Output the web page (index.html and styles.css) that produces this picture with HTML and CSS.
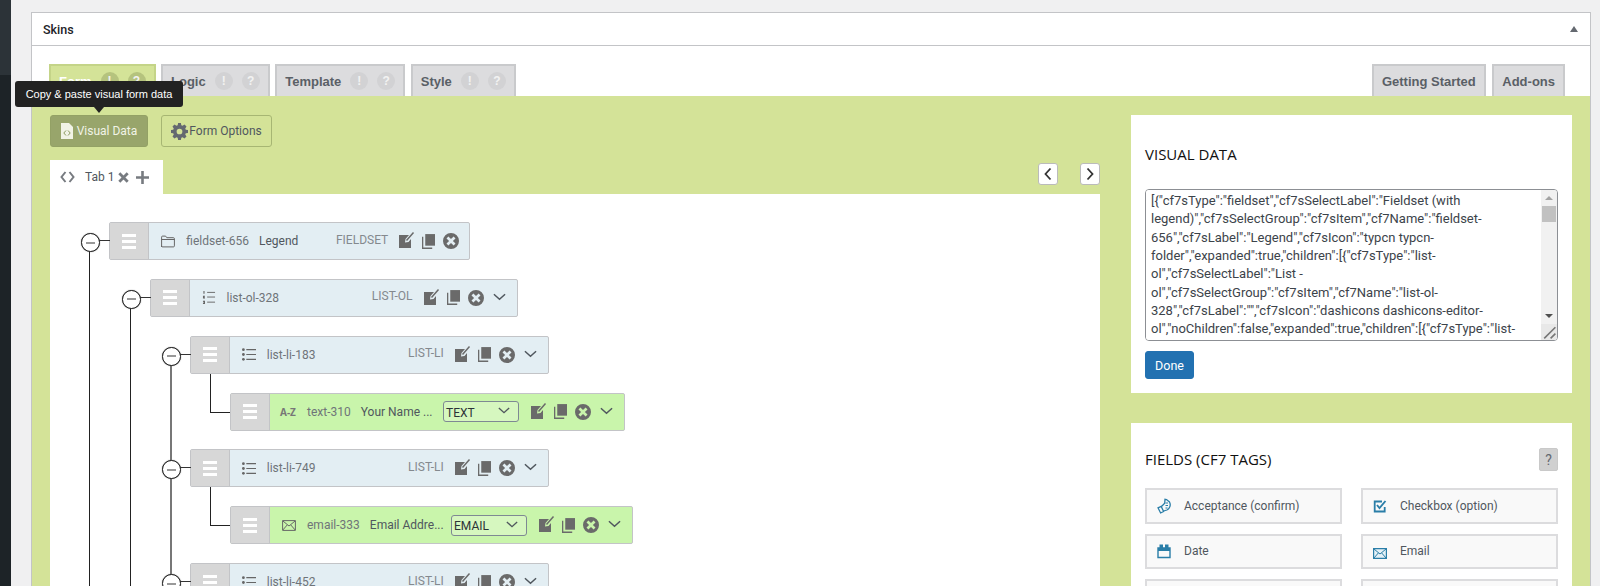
FILE: index.html
```html
<!DOCTYPE html>
<html lang="en">
<head>
    <meta charset="UTF-8">
    <title>Skins</title>
    <link rel="stylesheet" href="styles.css">
</head>
<body>
    <svg class="icon-defs" xmlns="http://www.w3.org/2000/svg">
        <symbol id="i-edit" viewBox="0 0 16 17">
            <path d="M0 4h10L6.500 8 6 11.500l3.500-.6L12 8v9H0z"/>
            <path d="M7.500 9.500 14.500 1.500" fill="none" stroke-width="1.500" stroke="currentColor"/>
        </symbol>
        <symbol id="i-copy" viewBox="0 0 14 16">
            <path d="M3.500 0H14v12.500H3.500z"/>
            <path d="M1.400 3v11.500H11v1.500H0V3z"/>
        </symbol>
        <symbol id="i-close" viewBox="0 0 16 16">
            <path fill-rule="evenodd" d="M8 0a8 8 0 1 1 0 16A8 8 0 0 1 8 0zM5.400 3.500 3.500 5.400 6.100 8l-2.600 2.600 1.900 1.900L8 9.900l2.600 2.600 1.900-1.900L9.900 8l2.600-2.600-1.900-1.900L8 6.100z"/>
        </symbol>
        <symbol id="i-chevron" viewBox="0 0 14 8">
            <path d="M1 1l6 5.500L13 1" fill="none" stroke="currentColor" stroke-width="1.600"/>
        </symbol>
        <symbol id="i-folder" viewBox="0 0 14 12">
            <path d="M.6 11.400V1.600q0-1 1-1h3l1.200 1.600h6.600q1 0 1 1v7.200q0 1-1 1H1.600q-1 0-1-1zM.6 4h12.800" fill="none" stroke="currentColor" stroke-width="1"/>
        </symbol>
        <symbol id="i-ol" viewBox="0 0 13 14">
            <path d="M4.500 1.500H13M4.500 6.500H13M4.500 12H13" fill="none" stroke="currentColor" stroke-width="1"/>
            <path d="M.5 0h1.200v3H.5zM0 5h2.200v1.200H1.200v.6H2.200V8H0zM0 10.500h2.200V14H0v-1h1.200v-.3H.4v-1h.8v-.2H0z"/>
        </symbol>
        <symbol id="i-ul" viewBox="0 0 13 12">
            <path d="M4 1.500h9M4 6h9M4 10.500h9" fill="none" stroke="currentColor" stroke-width="1"/>
            <circle cx="1.300" cy="1.500" r="1.300"/>
            <circle cx="1.300" cy="6" r="1.300"/>
            <circle cx="1.300" cy="10.500" r="1.300"/>
        </symbol>
        <symbol id="i-mail" viewBox="0 0 14 11">
            <path d="M.6.600h12.800v9.800H.6zM.8.900 7 6l6.200-5.100M.8 10l4.400-5M13.200 10 8.800 5" fill="none" stroke="currentColor" stroke-width="1"/>
        </symbol>
    </svg>

    <div class="admin-menu">
        <div class="admin-menu-item"></div>
    </div>

    <div class="wrap">
        <div class="postbox">
            <div class="postbox-header">
                <h2>Skins</h2>
                <span class="toggle-arrow"></span>
            </div>

            <div class="tabs">
                <div class="tab tab-active">Form <span class="badge">!</span><span class="badge">?</span></div>
                <div class="tab">Logic <span class="badge">!</span><span class="badge">?</span></div>
                <div class="tab">Template <span class="badge">!</span><span class="badge">?</span></div>
                <div class="tab">Style <span class="badge">!</span><span class="badge">?</span></div>
                <div class="tab tab-push">Getting Started</div>
                <div class="tab">Add-ons</div>
            </div>

            <div class="panel">
                <div class="panel-main">
                    <div class="toolbar">
                        <button class="tool-button tool-button-on">
                            <svg class="doc-icon" viewBox="0 0 12 16">
                                <path d="M0 0h8l4 4v12H0z" fill="#f1f3e6"/>
                                <path d="M5 7.500 2.800 10 5 12.500M7 7.500 9.200 10 7 12.500" fill="none" stroke="#8b9a5f" stroke-width="1"/>
                            </svg>
                            <span>Visual Data</span>
                            <span class="tooltip">Copy &amp; paste visual form data</span>
                        </button>
                        <button class="tool-button">
                            <svg class="gear-icon" viewBox="0 0 16 16">
                                <path fill-rule="evenodd" d="M6.700 0h2.600l.4 2.100 1.200.5L12.700 1.400l1.900 1.900-1.200 1.800.5 1.200 2.100.4v2.600l-2.100.4-.5 1.200 1.200 1.800-1.900 1.900-1.800-1.200-1.200.5-.4 2.100H6.700l-.4-2.100-1.200-.5-1.800 1.200-1.900-1.900 1.200-1.800-.5-1.200L0 9.300V6.700l2.100-.4.500-1.200-1.200-1.800 1.900-1.900 1.800 1.200 1.200-.5zM8 5.300a2.700 2.700 0 1 0 0 5.400 2.700 2.700 0 0 0 0-5.400z"/>
                            </svg>
                            <span>Form Options</span>
                        </button>
                    </div>

                    <div class="form-tabs">
                        <div class="form-tab">
                            <svg class="code-icon" viewBox="0 0 15 12">
                                <path d="M5.500 1 1.500 6l4 5M9.500 1l4 5-4 5" fill="none" stroke="currentColor" stroke-width="2"/>
                            </svg>
                            <span class="form-tab-name">Tab 1</span>
                            <svg class="tab-x" viewBox="0 0 11 11">
                                <path d="M1.300 1.300l8.400 8.400M9.700 1.300l-8.400 8.400" fill="none" stroke="currentColor" stroke-width="2.800"/>
                            </svg>
                            <svg class="tab-plus" viewBox="0 0 13 13">
                                <path d="M6.500 0v13M0 6.500h13" fill="none" stroke="currentColor" stroke-width="2.600"/>
                            </svg>
                        </div>
                        <div class="form-tab-nav">
                            <button class="nav-button"><svg viewBox="0 0 8 14"><path d="M6.500 1.500 1.500 7l5 5.500" fill="none" stroke="currentColor" stroke-width="1.800"/></svg></button>
                            <button class="nav-button"><svg viewBox="0 0 8 14"><path d="M1.500 1.500l5 5.500-5 5.500" fill="none" stroke="currentColor" stroke-width="1.800"/></svg></button>
                        </div>
                    </div>

                    <div class="form-area">
                        <ul class="tree">
                            <li class="has-children">
                                <div class="node w-fieldset">
                                    <span class="handle"><i></i><i></i><i></i></span>
                                    <svg class="node-icon"><use href="#i-folder"/></svg>
                                    <span class="node-name">fieldset-656</span>
                                    <span class="node-label">Legend</span>
                                    <span class="node-type">FIELDSET</span>
                                    <svg class="act act-edit"><use href="#i-edit"/></svg>
                                    <svg class="act act-copy"><use href="#i-copy"/></svg>
                                    <svg class="act act-close"><use href="#i-close"/></svg>
                                </div>
                                <ul>
                                    <li class="has-children">
                                        <div class="node w-ol">
                                            <span class="handle"><i></i><i></i><i></i></span>
                                            <svg class="node-icon"><use href="#i-ol"/></svg>
                                            <span class="node-name">list-ol-328</span>
                                            <span class="node-type">LIST-OL</span>
                                            <svg class="act act-edit"><use href="#i-edit"/></svg>
                                            <svg class="act act-copy"><use href="#i-copy"/></svg>
                                            <svg class="act act-close"><use href="#i-close"/></svg>
                                            <svg class="act-chevron"><use href="#i-chevron"/></svg>
                                        </div>
                                        <ul>
                                            <li class="has-children">
                                                <div class="node w-li">
                                                    <span class="handle"><i></i><i></i><i></i></span>
                                                    <svg class="node-icon"><use href="#i-ul"/></svg>
                                                    <span class="node-name">list-li-183</span>
                                                    <span class="node-type">LIST-LI</span>
                                                    <svg class="act act-edit"><use href="#i-edit"/></svg>
                                                    <svg class="act act-copy"><use href="#i-copy"/></svg>
                                                    <svg class="act act-close"><use href="#i-close"/></svg>
                                                    <svg class="act-chevron"><use href="#i-chevron"/></svg>
                                                </div>
                                                <ul>
                                                    <li class="leaf">
                                                        <div class="node node-field w-text">
                                                            <span class="handle"><i></i><i></i><i></i></span>
                                                            <span class="az-icon">A-Z</span>
                                                            <span class="node-name">text-310</span>
                                                            <span class="node-label">Your Name ...</span>
                                                            <span class="node-select">TEXT<svg><use href="#i-chevron"/></svg></span>
                                                            <svg class="act act-edit"><use href="#i-edit"/></svg>
                                                            <svg class="act act-copy"><use href="#i-copy"/></svg>
                                                            <svg class="act act-close"><use href="#i-close"/></svg>
                                                            <svg class="act-chevron"><use href="#i-chevron"/></svg>
                                                        </div>
                                                    </li>
                                                </ul>
                                            </li>
                                            <li class="has-children">
                                                <div class="node w-li">
                                                    <span class="handle"><i></i><i></i><i></i></span>
                                                    <svg class="node-icon"><use href="#i-ul"/></svg>
                                                    <span class="node-name">list-li-749</span>
                                                    <span class="node-type">LIST-LI</span>
                                                    <svg class="act act-edit"><use href="#i-edit"/></svg>
                                                    <svg class="act act-copy"><use href="#i-copy"/></svg>
                                                    <svg class="act act-close"><use href="#i-close"/></svg>
                                                    <svg class="act-chevron"><use href="#i-chevron"/></svg>
                                                </div>
                                                <ul>
                                                    <li class="leaf">
                                                        <div class="node node-field w-email">
                                                            <span class="handle"><i></i><i></i><i></i></span>
                                                            <svg class="node-icon"><use href="#i-mail"/></svg>
                                                            <span class="node-name">email-333</span>
                                                            <span class="node-label">Email Addre...</span>
                                                            <span class="node-select">EMAIL<svg><use href="#i-chevron"/></svg></span>
                                                            <svg class="act act-edit"><use href="#i-edit"/></svg>
                                                            <svg class="act act-copy"><use href="#i-copy"/></svg>
                                                            <svg class="act act-close"><use href="#i-close"/></svg>
                                                            <svg class="act-chevron"><use href="#i-chevron"/></svg>
                                                        </div>
                                                    </li>
                                                </ul>
                                            </li>
                                            <li class="has-children">
                                                <div class="node w-li">
                                                    <span class="handle"><i></i><i></i><i></i></span>
                                                    <svg class="node-icon"><use href="#i-ul"/></svg>
                                                    <span class="node-name">list-li-452</span>
                                                    <span class="node-type">LIST-LI</span>
                                                    <svg class="act act-edit"><use href="#i-edit"/></svg>
                                                    <svg class="act act-copy"><use href="#i-copy"/></svg>
                                                    <svg class="act act-close"><use href="#i-close"/></svg>
                                                    <svg class="act-chevron"><use href="#i-chevron"/></svg>
                                                </div>
                                            </li>
                                        </ul>
                                    </li>
                                </ul>
                            </li>
                        </ul>
                    </div>
                </div>

                <div class="panel-side">
                    <div class="card">
                        <h3 class="card-title card-title-data">VISUAL DATA</h3>
                        <div class="data-box">
                            <textarea class="data-text" wrap="off" readonly>[{"cf7sType":"fieldset","cf7sSelectLabel":"Fieldset (with
legend)","cf7sSelectGroup":"cf7sItem","cf7Name":"fieldset-
656","cf7sLabel":"Legend","cf7sIcon":"typcn typcn-
folder","expanded":true,"children":[{"cf7sType":"list-
ol","cf7sSelectLabel":"List -
ol","cf7sSelectGroup":"cf7sItem","cf7Name":"list-ol-
328","cf7sLabel":"","cf7sIcon":"dashicons dashicons-editor-
ol","noChildren":false,"expanded":true,"children":[{"cf7sType":"list-</textarea>
                            <div class="scrollbar">
                                <span class="scroll-up"></span>
                                <span class="scroll-thumb"></span>
                                <span class="scroll-down"></span>
                                <span class="scroll-grip">
                                    <svg viewBox="0 0 10 10"><path d="M9 2 2 9M9 6 6 9" fill="none" stroke="#777" stroke-width="1"/></svg>
                                </span>
                            </div>
                        </div>
                        <button class="done-button">Done</button>
                    </div>

                    <div class="card card-fields">
                        <div class="card-head">
                            <h3 class="card-title">FIELDS (CF7 TAGS)</h3>
                            <span class="help-button">?</span>
                        </div>
                        <div class="field-grid">
                            <div class="field-item">
                                <svg class="field-icon" viewBox="0 0 14 16">
                                    <path d="M1 9.800 3.600 15l3-1.500L4.200 8.400zM4.500 8.500l3.200-3.200.3-4 1.500.3 3 2.400q1.200 2.200.4 4.600t-3 3.400l-3.300 1" fill="none" stroke="currentColor" stroke-width="1.300"/>
                                    <path d="M8.500 5h2.500M8.500 7.500h2.500M8.500 10h2" fill="none" stroke="currentColor" stroke-width="1"/>
                                </svg>
                                Acceptance (confirm)
                            </div>
                            <div class="field-item">
                                <svg class="field-icon" viewBox="0 0 14 16">
                                    <path d="M9 3.500H1.700v10h10V9" fill="none" stroke="currentColor" stroke-width="1.800"/>
                                    <path d="M4 7l2.500 3L12.500 3" fill="none" stroke="currentColor" stroke-width="1.900"/>
                                </svg>
                                Checkbox (option)
                            </div>
                            <div class="field-item">
                                <svg class="field-icon" viewBox="0 0 14 16">
                                    <path d="M1 5h12v9.500H1z" fill="none" stroke="currentColor" stroke-width="1.400"/>
                                    <path d="M1 5h12v3H1zM2.500 1.500h3.500V5H2.500zM8 1.500h3.500V5H8z"/>
                                </svg>
                                Date
                            </div>
                            <div class="field-item">
                                <svg class="field-icon field-icon-mail" viewBox="0 0 14 11">
                                    <path d="M.6.600h12.800v9.800H.6z" fill="#e4f1f7" stroke="currentColor" stroke-width="1.200"/>
                                    <path d="M1 1l6 5 6-5M1 10l4.300-5M13 10 8.700 5" fill="none" stroke="currentColor" stroke-width="1"/>
                                </svg>
                                Email
                            </div>
                            <div class="field-item"></div>
                            <div class="field-item"></div>
                        </div>
                    </div>
                </div>
            </div>
        </div>
    </div>
</body>
</html>
```

FILE: styles.css
```css
* {
    box-sizing: border-box;
}

body {
    display: flex;
    height: 586px;
    margin: 0;
    overflow: hidden;
    background-color: #f0f0f1;
    font-family: Roboto, "Open Sans", sans-serif;
    font-size: 12px;
    color: #3c434a;
}

.icon-defs {
    display: none;
}

/* admin sidebar, only a sliver is visible */
.admin-menu {
    flex: 0 0 11px;
    background-color: #1d2327;
}

.admin-menu-item {
    height: 75px;
    background-color: #2c3338;
}

.wrap {
    flex: 1;
    min-width: 0;
    padding: 12px 9px 0 20px;
}

.postbox {
    height: 700px;
    border: 1px solid #c3c4c7;
    background-color: #fff;
}

.postbox-header {
    display: flex;
    justify-content: space-between;
    align-items: center;
    height: 33px;
    padding: 0 12px 0 11px;
    border-bottom: 1px solid #c3c4c7;
}

.postbox-header h2 {
    margin: 0;
    font-size: 12.5px;
    font-weight: 500;
    color: #1d2327;
}

.toggle-arrow {
    width: 0;
    height: 0;
    border-left: 4px solid transparent;
    border-right: 4px solid transparent;
    border-bottom: 6px solid #646970;
}

/* main tabs */
.tabs {
    display: flex;
    gap: 5.5px;
    height: 50px;
    padding: 18px 25px 0 17px;
}

.tab {
    display: flex;
    align-items: center;
    gap: 9px;
    height: 32px;
    padding: 0 8px;
    border: 2px solid #c9cacc;
    border-bottom: none;
    background-color: #dcdcde;
    font-family: "Liberation Sans", sans-serif;
    font-size: 13px;
    font-weight: bold;
    color: #5a6066;
}

.tab-active {
    border-color: #c4d488;
    background-color: #d4e398;
    color: #fff;
}

.tab-push {
    margin-left: auto;
}

.tab-push + .tab {
    margin-left: 1px;
}

.badge {
    display: flex;
    align-items: center;
    justify-content: center;
    width: 18px;
    height: 18px;
    border-radius: 50%;
    background-color: #d2d2d4;
    font-size: 12px;
    color: #f2f2f2;
}

.tab-active .badge {
    background-color: #b5c37e;
}

.panel {
    display: flex;
    height: 620px;
    padding: 19px 18px 0 18px;
    background-color: #d4e398;
}

.panel-main {
    flex: 0 0 1050px;
}

.panel-side {
    flex: 0 0 441px;
    margin-left: 31px;
}

/* visual data / form options */
.toolbar {
    display: flex;
    gap: 13px;
    height: 32px;
    margin-bottom: 13px;
}

.tool-button {
    position: relative;
    display: flex;
    align-items: center;
    justify-content: center;
    gap: 1px;
    width: 111px;
    padding: 0;
    border: 1px solid #a7b673;
    border-radius: 3px;
    background-color: #d4e398;
    font-family: inherit;
    font-size: 12px;
    white-space: nowrap;
    color: #50575e;
}

.tool-button-on {
    gap: 4px;
    width: 98px;
    border-color: #93a165;
    background-color: #98a56b;
    color: #f1f3e6;
}

.doc-icon {
    width: 12px;
    height: 16px;
}

.gear-icon {
    width: 17px;
    height: 17px;
    fill: #646970;
}

.tooltip {
    position: absolute;
    left: 50%;
    bottom: calc(100% + 9px);
    width: 168px;
    height: 26px;
    margin-left: -84px;
    border-radius: 3px;
    background-color: #222;
    font-family: "Liberation Sans", sans-serif;
    font-size: 11px;
    line-height: 26px;
    color: #fff;
    text-align: center;
}

.tooltip::after {
    content: "";
    position: absolute;
    left: 50%;
    top: 100%;
    margin-left: -5px;
    border-left: 5px solid transparent;
    border-right: 5px solid transparent;
    border-top: 6px solid #222;
}

/* form tabs */
.form-tabs {
    display: flex;
    justify-content: space-between;
    height: 34px;
}

.form-tab {
    display: flex;
    align-items: center;
    width: 113px;
    padding-left: 10px;
    background-color: #fff;
    color: #777b80;
}

.code-icon {
    width: 15px;
    height: 12px;
    margin-right: 10px;
}

.form-tab-name {
    margin-right: 4px;
    color: #50575e;
}

.tab-x {
    width: 11px;
    height: 11px;
    margin-right: 7px;
}

.tab-plus {
    width: 13px;
    height: 13px;
}

.form-tab-nav {
    display: flex;
    gap: 22px;
    padding-top: 3px;
}

.nav-button {
    display: flex;
    align-items: center;
    justify-content: center;
    width: 20px;
    height: 22px;
    padding: 0;
    border: 1px solid #bbb;
    border-radius: 3px;
    background-color: #fff;
    color: #333;
}

.nav-button svg {
    width: 8px;
    height: 14px;
}

.form-area {
    height: 500px;
    padding: 28px 0 0 59.25px;
    background-color: #fff;
}

/* field tree */
.tree,
.tree ul {
    margin: 0;
    padding: 0;
    list-style: none;
}

.tree ul {
    margin-left: 40.25px;
}

.tree li {
    position: relative;
}

.has-children::before {
    content: "";
    position: absolute;
    left: -20px;
    top: 19px;
    bottom: -100px;
    border-left: 1px solid #222;
}

.tree ul ul > .has-children::before {
    border-left: 2px solid #777;
}

.has-children::after {
    content: "";
    position: absolute;
    left: -28px;
    top: 11px;
    width: 17px;
    height: 17px;
    border: 1px solid #222;
    border-radius: 50%;
    box-shadow: 0 0 1px #444;
    background: linear-gradient(#999, #999) center / 9px 2px no-repeat #fff;
}

.has-children > .node::before {
    content: "";
    position: absolute;
    left: -12px;
    top: 17px;
    width: 12px;
    border-top: 1px solid #333;
}

.leaf::before {
    content: "";
    position: absolute;
    left: -20px;
    top: -19px;
    width: 20px;
    height: 38px;
    border-left: 1px solid #222;
    border-bottom: 1px solid #222;
}

.node {
    position: relative;
    display: flex;
    align-items: center;
    height: 38px;
    margin-bottom: 18.85px;
    border: 1px solid #c3c4c7;
    border-radius: 2px;
    background-color: #e3eef3;
    color: #6f7479;
}

.node-field {
    background-color: #c9f5ab;
}

.w-fieldset { width: 361px; }
.w-ol { width: 368px; }
.w-li { width: 359px; }
.w-text { width: 395px; }
.w-email { width: 403px; }

.handle {
    display: flex;
    flex: 0 0 39px;
    flex-direction: column;
    justify-content: center;
    align-items: center;
    gap: 3px;
    align-self: stretch;
    border-right: 1px solid #c3c4c7;
    background-color: #d7d7d7;
}

.handle i {
    width: 14px;
    height: 3px;
    background-color: #fff;
}

.node-icon {
    flex: 0 0 14px;
    width: 14px;
    height: 13px;
    margin-left: 12px;
    margin-right: 11px;
    fill: currentColor;
    color: #666;
}

.az-icon {
    flex: 0 0 17px;
    margin-left: 10px;
    margin-right: 10px;
    font-family: "Open Sans", sans-serif;
    font-size: 10px;
    font-weight: 700;
    color: #777;
}

.node-name {
    white-space: nowrap;
}

.node-label {
    margin-left: 10px;
    white-space: nowrap;
    color: #50575e;
}

.node-type {
    margin-left: auto;
    margin-right: 11px;
    margin-top: -3px;
    color: #84898e;
}

.node-select {
    display: flex;
    align-items: center;
    justify-content: space-between;
    flex: 0 0 76px;
    height: 21px;
    margin-left: auto;
    margin-right: 12px;
    padding: 2px 8px 0 2px;
    border: 1px solid #7e8993;
    border-radius: 3px;
    background-color: #d6f7bf;
    color: #2c3338;
}

.node-select svg {
    width: 12px;
    height: 7px;
    margin-top: -4px;
    color: #50575e;
}

.act {
    flex: none;
    fill: #6a6a6a;
    color: #6a6a6a;
}

.act-edit {
    width: 16px;
    height: 17px;
    margin-right: 7px;
    margin-top: -3px;
}

.act-copy {
    width: 13px;
    height: 15px;
    margin-right: 8px;
}

.act-close {
    width: 16px;
    height: 16px;
    margin-right: 9px;
}

.w-fieldset .act-close {
    margin-right: 10px;
}

.act-chevron {
    flex: none;
    width: 13px;
    height: 8px;
    margin-right: 11px;
    margin-top: -2px;
    color: #50575e;
}

/* side column */
.card {
    height: 278px;
    margin-bottom: 30px;
    padding: 30px 14px 0;
    background-color: #fff;
}

.card-title {
    margin: -2px 0 0;
    font-family: "Open Sans", sans-serif;
    font-size: 15px;
    font-weight: 500;
    line-height: 22px;
    color: #111;
}

.card-title-data {
    margin-bottom: 24px;
}

.data-box {
    display: flex;
    height: 152px;
    border: 1px solid #8c8f94;
    border-radius: 4px;
    overflow: hidden;
}

.data-text {
    flex: 1;
    padding: 2px 5px;
    border: none;
    outline: none;
    resize: none;
    overflow: hidden;
    font-family: Roboto, sans-serif;
    font-size: 13px;
    line-height: 18.33px;
    color: #3c434a;
}

.scrollbar {
    position: relative;
    flex: 0 0 16px;
    background-color: #f1f1f1;
}

.scroll-up,
.scroll-down {
    position: absolute;
    left: 4px;
    width: 0;
    height: 0;
    border-left: 4px solid transparent;
    border-right: 4px solid transparent;
}

.scroll-up {
    top: 6px;
    border-bottom: 4px solid #a3a3a3;
}

.scroll-down {
    top: 124px;
    border-top: 4px solid #505050;
}

.scroll-thumb {
    position: absolute;
    left: 1px;
    top: 16px;
    width: 14px;
    height: 16px;
    background-color: #c1c1c1;
}

.scroll-grip {
    position: absolute;
    right: 0;
    bottom: 0;
    width: 16px;
    height: 16px;
    background-color: #e8e8e8;
}

.scroll-grip svg {
    display: block;
    width: 16px;
    height: 16px;
}

.done-button {
    display: block;
    width: 49px;
    height: 28px;
    margin-top: 10px;
    padding: 0;
    border: 1px solid #2271b1;
    border-radius: 3px;
    background-color: #2271b1;
    font-family: inherit;
    font-size: 12.5px;
    color: #fff;
}

.card-fields {
    height: 300px;
    padding-top: 25px;
}

.card-head {
    display: flex;
    justify-content: space-between;
    align-items: center;
    height: 23px;
    margin-bottom: 17px;
}

.help-button {
    display: flex;
    align-items: center;
    justify-content: center;
    width: 19px;
    height: 23px;
    border: 1px solid #c9c9c9;
    border-radius: 2px;
    background-color: #d0d0d0;
    font-size: 14px;
    color: #646970;
}

.field-grid {
    display: grid;
    grid-template-columns: 1fr 1fr;
    gap: 10px 19px;
}

.field-item {
    display: flex;
    align-items: center;
    height: 35.5px;
    padding-left: 37px;
    border: 2px solid #dcdcde;
    background-color: #f9f9f9;
    color: #50575e;
}

.field-icon {
    flex: none;
    width: 14px;
    height: 16px;
    margin-left: -27px;
    margin-right: 13px;
    fill: #2a7ea8;
    color: #2a7ea8;
}

.field-icon-mail {
    height: 11px;
    margin-top: 4px;
}
```
